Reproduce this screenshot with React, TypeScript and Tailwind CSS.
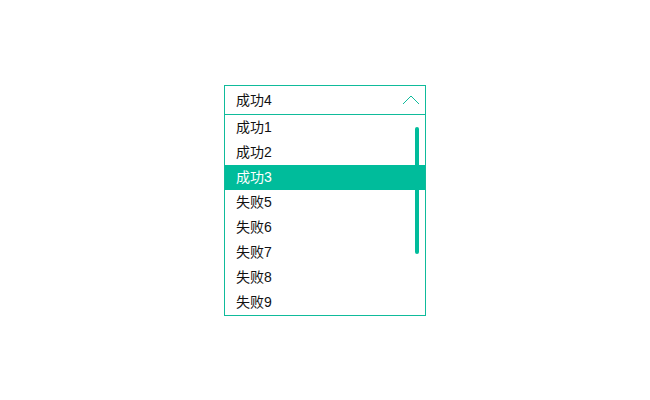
const options = ['成功1', '成功2', '成功3', '失败5', '失败6', '失败7', '失败8', '失败9'];

export default function App() {
  const active = 2;

  return (
    <div
      className="h-[400px] w-[650px] bg-white pl-[224px] pt-[85px]"
      style={{ fontFamily: '"Liberation Sans", "Noto Sans CJK SC", sans-serif' }}
    >
      <div className="w-[202px] border border-[#0fbb9b] text-[14px] text-[#111]">
        <div className="flex h-[29px] items-center justify-between border-b border-[#0fbb9b] pl-[11px] pr-[5px]">
          <span>成功4</span>
          <svg width="18" height="10" viewBox="0 0 18 10" fill="none">
            <polyline
              points="1,9 9,1 17,9"
              stroke="#0fbb9b"
              strokeWidth="1"
            />
          </svg>
        </div>
        <div className="relative h-[200px] overflow-hidden">
          {options.map((o, i) => (
            <div
              key={o}
              className={
                i === active
                  ? 'flex h-[25px] items-center bg-[#00bc9b] pl-[11px] text-white'
                  : 'flex h-[25px] items-center pl-[11px]'
              }
            >
              {o}
            </div>
          ))}
          <div className="absolute right-[6px] top-[12px] h-[127px] w-[4px] rounded-full bg-[#00bc9b]" />
        </div>
      </div>
    </div>
  );
}
